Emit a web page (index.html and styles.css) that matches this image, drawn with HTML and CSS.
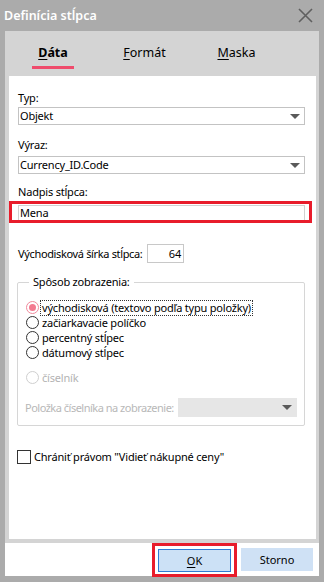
FILE: index.html
```html
<!DOCTYPE html>
<html lang="sk">
<head>
    <meta charset="UTF-8">
    <meta name="viewport" content="width=device-width, initial-scale=1.0">
    <title>Definícia stĺpca</title>
    <link rel="stylesheet" href="styles.css">
</head>
<body>
    <div class="window">
        <div class="titlebar">
            <span class="title">Definícia stĺpca</span>
            <svg class="close" width="15" height="15" viewBox="0 0 15 15">
                <path d="M1 1 L14 14 M14 1 L1 14" stroke="#5f5f5f" stroke-width="1.6" fill="none"/>
            </svg>
        </div>

        <div class="frame">
            <div class="panel">
                <div class="tabs">
                    <div class="tab tab-active"><span class="key">D</span>áta</div>
                    <div class="tab tab-second"><span class="key">F</span>ormát</div>
                    <div class="tab tab-third"><span class="key">M</span>aska</div>
                </div>

                <div class="content">
                    <div class="field">
                        <div class="label">Typ:</div>
                        <div class="select">Objekt<span class="arrow"></span></div>
                    </div>

                    <div class="field field-2">
                        <div class="label">Výraz:</div>
                        <div class="select select-2">Currency_ID.Code<span class="arrow"></span></div>
                    </div>

                    <div class="field field-3">
                        <div class="label">Nadpis stĺpca:</div>
                        <div class="highlight">
                            <div class="input">Mena</div>
                        </div>
                    </div>

                    <div class="width-row">
                        <div class="width-label">Východisková šírka stĺpca:</div>
                        <div class="number">64</div>
                    </div>

                    <fieldset class="group">
                        <legend>Spôsob zobrazenia:</legend>
                        <div class="radio-row">
                            <span class="radio radio-on"></span>
                            <span class="radio-text focused">východisková (textovo podľa typu položky)</span>
                        </div>
                        <div class="radio-row">
                            <span class="radio"></span>
                            <span class="radio-text">začiarkavacie políčko</span>
                        </div>
                        <div class="radio-row">
                            <span class="radio"></span>
                            <span class="radio-text">percentný stĺpec</span>
                        </div>
                        <div class="radio-row">
                            <span class="radio"></span>
                            <span class="radio-text">dátumový stĺpec</span>
                        </div>
                        <div class="radio-row radio-row-disabled">
                            <span class="radio radio-off"></span>
                            <span class="radio-text">číselník</span>
                        </div>
                        <div class="lookup-row">
                            <span class="lookup-label">Položka číselníka na zobrazenie:</span>
                            <div class="select select-disabled"><span class="arrow"></span></div>
                        </div>
                    </fieldset>

                    <div class="check-row">
                        <span class="checkbox"></span>
                        <span>Chrániť právom "Vidieť nákupné ceny"</span>
                    </div>
                </div>
            </div>

            <div class="footer">
                <div class="highlight-btn">
                    <button class="btn btn-default"><span class="key">O</span>K</button>
                </div>
                <button class="btn">Storno</button>
            </div>
        </div>
    </div>
</body>
</html>
```

FILE: styles.css
```css
* {
    margin: 0;
    padding: 0;
    box-sizing: border-box;
}

body {
    font-family: 'Noto Sans', 'Open Sans', sans-serif;
    font-size: 11px;
    color: #000;
    background: #ababab;
    width: 324px;
    height: 582px;
    overflow: hidden;
}

.window {
    display: flex;
    flex-direction: column;
    height: 582px;
}

.titlebar {
    height: 31px;
    display: flex;
    align-items: center;
    justify-content: space-between;
    padding: 0 11px 1px 4px;
}

.title {
    color: #fff;
    font-size: 12.5px;
    font-weight: 600;
}

.close {
    display: block;
}

.frame {
    margin: 0 5px 6px 5px;
    flex: 1;
    display: flex;
    flex-direction: column;
}

.panel {
    background: #d4d4d4;
    padding: 0 3px 4px 4px;
}

/* Záložky */
.tabs {
    height: 45px;
    display: flex;
    padding-left: 23px;
}

.tab {
    font-size: 12.5px;
    line-height: 16px;
    padding-top: 14px;
    text-align: center;
    width: 61px;
}

.tab-active {
    width: 42px;
    font-weight: 700;
}

.tab-active::after {
    content: "";
    display: block;
    height: 3px;
    margin-top: 5px;
    background: #ef4b6c;
}

.tab-second {
    margin-left: 40px;
}

.tab-third {
    margin-left: 31px;
}

.key {
    text-decoration: underline;
    text-underline-offset: 2px;
}

/* Obsah */
.content {
    background: #fff;
    height: 463px;
    padding: 14px 11px 0 9px;
    letter-spacing: -0.2px;
}

.label {
    line-height: 16px;
}

.select {
    position: relative;
    height: 18px;
    margin-top: 1px;
    border: 1px solid #c3c3c3;
    padding-left: 1px;
    line-height: 16px;
}

.select-2 {
    margin-top: 3px;
}

.arrow {
    position: absolute;
    right: 4px;
    top: 6px;
    width: 0;
    height: 0;
    border-left: 5px solid transparent;
    border-right: 5px solid transparent;
    border-top: 5px solid #5a5a5a;
}

.field-2 {
    margin-top: 12px;
}

.field-3 {
    margin-top: 10px;
}

.highlight {
    margin: 1px 0 0 -9px;
    width: 303px;
    border: 3px solid #e81c2b;
    padding: 1px 4px 0 6px;
}

.input {
    height: 15px;
    border: 1px solid #d0d0d0;
    border-bottom: none;
    padding-left: 1px;
    line-height: 14px;
}

.width-row {
    display: flex;
    align-items: center;
    margin-top: 21px;
}

.width-label {
    flex: 0 0 129px;
    min-width: 0;
    white-space: nowrap;
    letter-spacing: -0.35px;
}

.number {
    width: 37px;
    height: 19px;
    border: 1px solid #c8c8c8;
    text-align: right;
    padding-right: 2px;
    line-height: 17px;
    background: #fff;
}

/* Skupina */
.group {
    margin: 11px 0 0 -1px;
    width: 288px;
    border: 1px solid #d6d6d6;
    border-radius: 2px;
    padding: 0 7px 8px 8px;
}

.group legend {
    margin-left: 3px;
    padding: 0 4px 0 4px;
    line-height: 16px;
}

.radio-row {
    display: flex;
    align-items: center;
    height: 15px;
}

.radio-row:first-of-type {
    margin-top: 10px;
}

.radio {
    width: 13px;
    height: 13px;
    border: 1px solid #333;
    border-radius: 50%;
    background: #fff;
    flex-shrink: 0;
    display: flex;
    align-items: center;
    justify-content: center;
}

.radio-on {
    border-color: #f08a9c;
}

.radio-on::after {
    content: "";
    width: 7px;
    height: 7px;
    border-radius: 50%;
    background: #f37a90;
}

.radio-off {
    border-color: #cfcfcf;
}

.radio-text {
    margin-left: 2px;
    padding: 0 1px;
    line-height: 14px;
}

.focused {
    outline: 1px dotted #333;
}

.radio-row-disabled {
    margin-top: 10px;
    color: #b3b3b3;
}

.lookup-row {
    display: flex;
    align-items: center;
    margin: 13px 0 0 -1px;
    color: #b8b8b8;
}

.lookup-label {
    flex: 0 0 153px;
    min-width: 0;
    white-space: nowrap;
    letter-spacing: -0.5px;
}

.select-disabled {
    width: 119px;
    height: 19px;
    margin-top: 0;
    background: #e6e6e6;
    border-color: #e6e6e6;
}

.check-row {
    display: flex;
    align-items: center;
    margin: 23px 0 0 -1px;
    gap: 3px;
}

.checkbox {
    width: 14px;
    height: 14px;
    border: 1px solid #333;
    background: #fff;
}

/* Tlačidlá */
.footer {
    height: 33px;
    background: #fff;
    display: flex;
    align-items: center;
    justify-content: flex-end;
    gap: 4px;
    padding-right: 6px;
}

.highlight-btn {
    border: 3px solid #e81c2b;
    padding: 3px 3px 2px 3px;
}

.btn {
    display: block;
    width: 72px;
    height: 23px;
    font-family: inherit;
    font-size: 11px;
    color: #000;
    background: #cfe1f5;
    border: 1px solid #cfe1f5;
}

.btn-default {
    width: 73px;
    background: #cce1f6;
    border-color: #2f7bd3;
}
```
